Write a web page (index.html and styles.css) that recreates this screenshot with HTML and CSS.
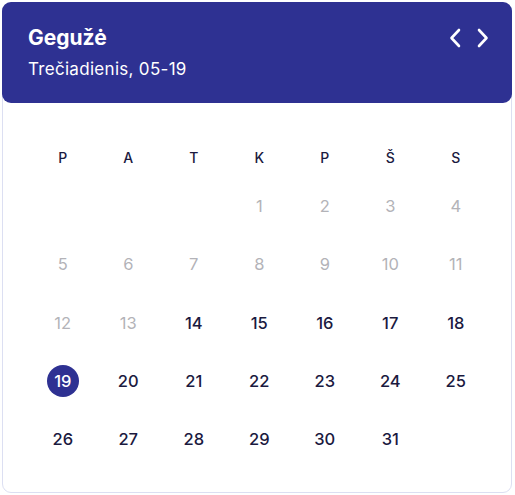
FILE: index.html
```html
<!DOCTYPE html>
<html lang="lt">
<head>
<meta charset="utf-8">
<link rel="stylesheet" href="styles.css">
</head>
<body>
<div class="card">
  <div class="header">
    <div class="titles">
      <div class="month">Gegužė</div>
      <div class="date">Trečiadienis, 05-19</div>
    </div>
    <div class="nav">
      <svg class="arrow" width="12" height="20" viewBox="0 0 12 20"><polyline points="10,2 2.5,10 10,18" fill="none" stroke="#fff" stroke-width="2.6" stroke-linecap="round" stroke-linejoin="round"/></svg>
      <svg class="arrow" width="12" height="20" viewBox="0 0 12 20"><polyline points="2,2 9.5,10 2,18" fill="none" stroke="#fff" stroke-width="2.6" stroke-linecap="round" stroke-linejoin="round"/></svg>
    </div>
  </div>
  <div class="body">
    <div class="weekdays">
      <span>P</span><span>A</span><span>T</span><span>K</span><span>P</span><span>Š</span><span>S</span>
    </div>
    <div class="days">
      <span></span><span></span><span></span>
      <span class="muted">1</span><span class="muted">2</span><span class="muted">3</span><span class="muted">4</span>
      <span class="muted">5</span><span class="muted">6</span><span class="muted">7</span><span class="muted">8</span><span class="muted">9</span><span class="muted">10</span><span class="muted">11</span>
      <span class="muted">12</span><span class="muted">13</span><span>14</span><span>15</span><span>16</span><span>17</span><span>18</span>
      <span><b class="selected">19</b></span><span>20</span><span>21</span><span>22</span><span>23</span><span>24</span><span>25</span>
      <span>26</span><span>27</span><span>28</span><span>29</span><span>30</span><span>31</span><span></span>
    </div>
  </div>
</div>
</body>
</html>
```

FILE: styles.css
```css
* { box-sizing: border-box; }
html, body { margin: 0; padding: 0; background: #fff; }
body {
  font-family: Inter, "Liberation Sans", sans-serif;
  padding: 2px;
}
.card {
  width: 510px;
  height: 491px;
  border: 1px solid #dcdff2;
  border-radius: 9px;
  background: #fff;
  position: relative;
}
.header {
  margin: -1px;
  height: 101px;
  background: #2e3192;
  border-radius: 9px;
  color: #fff;
  display: flex;
  justify-content: space-between;
  padding: 22px 0 0 26px;
}
.month {
  font-size: 21px;
  font-weight: 700;
  line-height: 28px;
}
.date {
  font-size: 17px;
  line-height: 20px;
  letter-spacing: 0.3px;
  margin-top: 7px;
}
.nav {
  display: flex;
  gap: 16px;
  padding-top: 4px;
  padding-right: 23px;
}
.arrow { display: block; }
.body {
  padding: 35px 0 0 27px;
}
.weekdays, .days {
  display: grid;
  grid-template-columns: repeat(7, 65.5px);
}
.weekdays span {
  height: 40px;
  display: flex;
  align-items: center;
  justify-content: center;
  font-size: 14px;
  font-weight: 500;
  color: #1b1a3f;
}
.days span {
  height: 58.3px;
  display: flex;
  align-items: center;
  justify-content: center;
  font-size: 16.5px;
  font-weight: 500;
  color: #1b1a3f;
}
.days span.muted { color: #b3b3b8; font-weight: 400; }
.selected {
  width: 32px;
  height: 32px;
  border-radius: 50%;
  background: #2e3192;
  color: #fff;
  display: flex;
  align-items: center;
  justify-content: center;
  font-weight: 500;
}
```
